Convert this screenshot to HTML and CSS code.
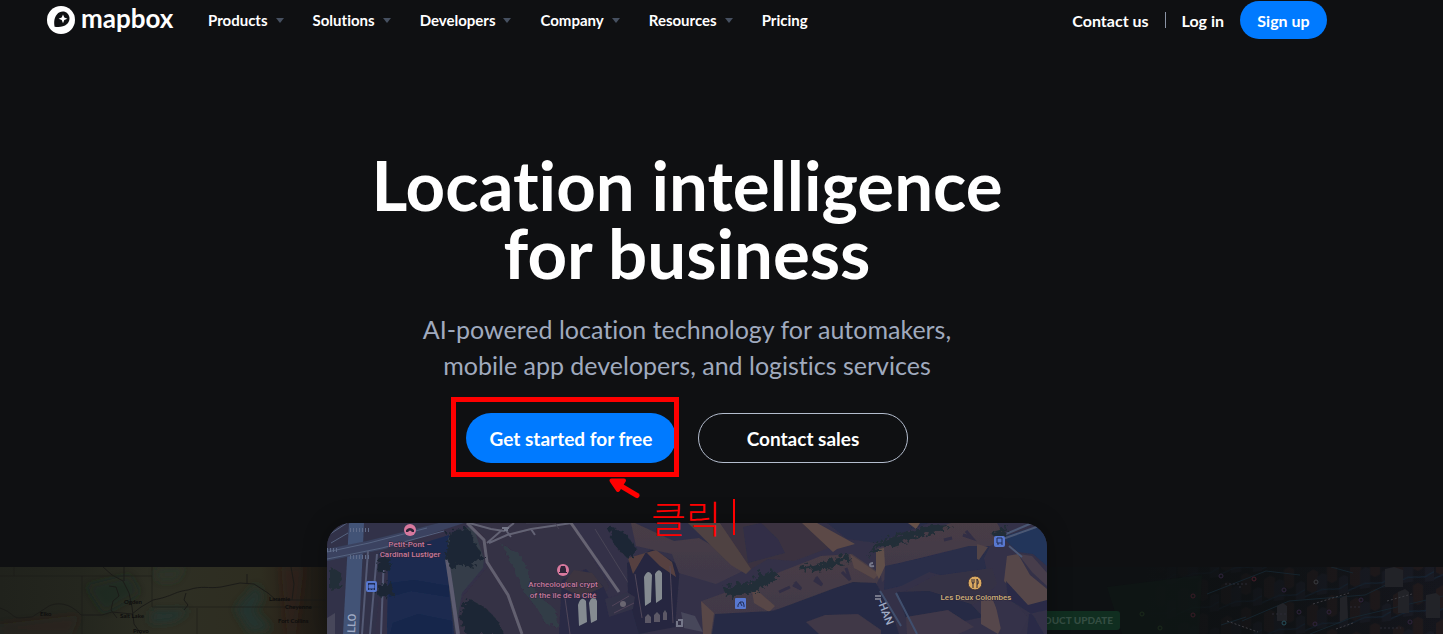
FILE: index.html
```html
<!DOCTYPE html>
<html lang="en">
<head>
  <meta charset="UTF-8" />
  <title>Mapbox - Location intelligence for business</title>
  <meta name="viewport" content="width=device-width, initial-scale=1" />
  <link rel="stylesheet" href="styles.css">
</head>
<body>
  <header class="site-header">
    <a class="logo" href="#">
      <svg class="logo-mark" viewBox="0 0 28 28" aria-hidden="true">
        <circle cx="14" cy="14" r="14" fill="#fff" />
        <path d="M7.6 20.7C6.9 16.5 7 11.800 9.900 8.500 12.800 5 17.600 4.700 20.500 7.500 23.400 10.500 23.200 15.100 20 18.100 16.500 21.200 11.800 21.400 7.600 20.700Z" fill="#0f1012" />
        <path d="M16 8.400 17.300 11.500 20.400 12.800 17.300 14.100 16 17.200 14.700 14.100 11.600 12.800 14.700 11.500Z" fill="#fff" />
      </svg>
      <span>mapbox</span>
    </a>
    <nav class="main-nav">
      <a class="has-menu" href="#">Products</a>
      <a class="has-menu" href="#">Solutions</a>
      <a class="has-menu" href="#">Developers</a>
      <a class="has-menu" href="#">Company</a>
      <a class="has-menu" href="#">Resources</a>
      <a href="#">Pricing</a>
    </nav>
    <div class="account">
      <a href="#">Contact us</a>
      <span class="divider"></span>
      <a href="#">Log in</a>
      <button class="signup" type="button">Sign up</button>
    </div>
  </header>

  <main>
    <section class="hero">
      <h1>Location intelligence<br>for business</h1>
      <p>AI-powered location technology for automakers,<br>mobile app developers, and logistics services</p>
      <div class="actions">
        <div class="callout">
          <button class="btn btn-primary" type="button">Get started for free</button>
          <span class="callout-frame"></span>
          <svg class="callout-arrow" viewBox="0 0 32 22" aria-hidden="true">
            <path d="M29 18.500 13 9" stroke="#f00" stroke-width="5" stroke-linecap="round" />
            <path d="M3.500 3.500H16L10 13Z" fill="#f00" stroke="#f00" stroke-width="4" stroke-linejoin="round" />
          </svg>
          <span class="callout-text" lang="ko">클릭</span>
        </div>
        <button class="btn btn-outline" type="button">Contact sales</button>
      </div>
    </section>

    <section class="carousel">
      <div class="slide slide-prev">
        <svg viewBox="0 0 327 67" preserveAspectRatio="xMinYMin slice" aria-hidden="true">
          <defs>
            <linearGradient id="land" x1="0" x2="1">
              <stop offset="0" stop-color="#20221c" />
              <stop offset=".25" stop-color="#24261e" />
              <stop offset=".5" stop-color="#2e2f24" />
              <stop offset=".8" stop-color="#2e2d20" />
              <stop offset=".88" stop-color="#292219" />
              <stop offset="1" stop-color="#1c1a15" />
            </linearGradient>
            <filter id="soft"><feGaussianBlur stdDeviation="4" /></filter>
          </defs>
          <rect width="327" height="67" fill="url(#land)" />
          <g filter="url(#soft)">
            <path d="M152 44 190 43 174 54 150 56ZM235 42 257 17 263 30 255 44 272 62 250 66Z" fill="#183536" opacity=".65" />
            <path d="M0 57 80 48 72 67H0ZM281 0H304L296 67H287Z" fill="#3b2118" opacity=".3" />
            <path d="M86 19 130 8 140 26 104 46Z" fill="#1c2824" opacity=".5" />
            <path d="M154 3 186 0 176 14 158 14Z" fill="#213a2f" opacity=".4" />
          </g>
          <g fill="none" stroke="#1b1b18">
            <path d="M0 9H152M82 9V67M152 0V40H327M197 41V67M14 0V9M312 0V38" opacity=".65" />
            <path d="M0 41C12 45 13 51 19 51L32 50 49 39C60 34 72 38 81 48H102L112 45 132 47 141 40 153 33C174 29 173 25 188 23 203 18 207 22 221 20L240 16 254 17 268 26 276 33H300L327 33" />
            <path d="M103 0 112 8 123 14 129 26 132 40 134 57 141 67M124 0V14M109 19 116 20 119 29 113 34 111 43 117 51M291 0 294 17 292 33M186 26 184 33 188 38 184 43M247 7V16" />
          </g>
          <g class="map-labels">
            <text x="124" y="37">Ogden</text><text x="120" y="51">Salt Lake</text>
            <text x="133" y="66">Provo</text><text x="40" y="49">Elko</text>
            <text x="269" y="34">Laramie</text><text x="285" y="42">Cheyenne</text><text x="278" y="56">Fort Collins</text>
          </g>
        </svg>
      </div>

      <div class="slide slide-current">
        <svg viewBox="0 0 720 111" preserveAspectRatio="xMidYMin slice" role="img" aria-label="3D map of Paris">
          <defs>
            <linearGradient id="roof" x1="0" y1="0" x2="0" y2="1">
              <stop offset="0" stop-color="#483c45" />
              <stop offset="1" stop-color="#3f3848" />
            </linearGradient>
            <filter id="edge"><feGaussianBlur stdDeviation=".6" /></filter>
            <filter id="rough" x="-20%" y="-20%" width="140%" height="140%">
              <feTurbulence baseFrequency=".14" numOctaves="2" seed="4" />
              <feDisplacementMap in="SourceGraphic" scale="10" />
            </filter>
          </defs>
          <rect width="720" height="111" fill="#343148" />
          <g filter="url(#edge)">
            <!-- left bank, avenue and river -->
            <path d="M0 0H112L55 38 48 111H0Z" fill="#313349" />
            <path d="M22 0H37L32 111H16Z" fill="#435276" />
            <path d="M0 26 40 18 112 0H137L58 26 0 38Z" fill="#3a4360" />
            <path d="M0 29 42 20 100 5M0 36 55 25 117 8M0 13 20 0M4 20 21 10" fill="none" stroke="#566280" />
            <path d="M41 28 35 111M50 31 43 111M57 32 54 111" fill="none" stroke="#545a74" stroke-width="2" />
            <path d="M61 31 122 12 120 45 127 111H60Z" fill="#1b2b50" />
            <path d="M64 60 87 57 122 63V74L84 68 62 74ZM66 100 91 91 125 98V111H63Z" fill="#142449" opacity=".7" />
            <!-- island: quay, square and paths -->
            <path d="M121 15 145 2 158 27 156 45 135 70 128 111 122 65Z" fill="#343c4a" />
            <path d="M145 0H245L282 63 260 111H129L136 73 160 44Z" fill="#353044" />
            <path d="M173 20 190 28 199 46 207 69 225 83 229 101 216 98 207 82 194 66 181 35Z" fill="#31474a" opacity=".6" filter="url(#rough)" />
            <path d="M120 36 125 69 131 111" fill="none" stroke="#5d5b70" stroke-width="4" />
            <path d="M140 0 157 17 160 39 181 72 195 111" fill="none" stroke="#62606f" stroke-width="3" />
            <path d="M142 0 164 6 177 8 187 0M162 20 180 12 204 6 245 0M178 6 184 14M204 6 208 12M160 20 175 7" fill="none" stroke="#636374" stroke-width="2" />
            <path d="M244 0 292 69" fill="none" stroke="#666472" stroke-width="3" />
            <path d="M199 0 228 0 232 6M268 6 307 69" fill="none" stroke="#494557" />
            <!-- cathedral -->
            <path d="M235 57 259 46 276 63 283 78 307 72 312 111H232Z" fill="#292b45" />
            <path d="M234 64 247 47 265 50 276 64 254 74Z" fill="#3d3541" />
            <path d="M300 40 326 26 353 43 348 104 312 111 301 72Z" fill="#25273f" />
            <path d="M301 35 329 27 345 39 349 54 333 43 319 29 306 51Z" fill="#57413f" />
            <path d="M278 76 300 69 308 74 306 86 282 94Z" fill="#333047" />
            <path d="M285 83 302 73M287 90 307 80M308 51 315 95M343 43 346 100M238 75 243 111" stroke="#51465a" fill="none" />
            <path d="M251 82Q254 72 259 78L260 99 252 103ZM262 80Q266 69 270 78L270 97 264 100ZM317 54Q321 45 325 52L324 79 318 83ZM328 51Q332 44 335 50L335 76 329 80Z" fill="#858b91" />
            <path d="M318 94 321 91 324 94V100H318ZM327 92 330 89 333 92V99H327ZM336 90 338 87 340 90V97H336Z" fill="#5b5866" />
            <circle cx="296" cy="81" r="3" fill="#6b6671" />
            <!-- city blocks -->
            <path d="M304 0H393L424 44 389 61 352 50 345 31 309 23Z" fill="url(#roof)" />
            <path d="M308 0 347 18 372 15 398 30 393 0Z" fill="#2e2e46" />
            <path d="M361 0 393 0 425 45 419 51 404 42Z" fill="#504242" />
            <path d="M393 0H485L514 15 510 22 467 38 441 36 424 46Z" fill="#3a3240" />
            <path d="M416 4 434 0 451 16 458 30 421 40Z" fill="#302f46" />
            <path d="M475 0H490L528 21 510 26 506 29Z" fill="#5c4a46" />
            <path d="M500 0H602L549 20 520 16Z" fill="#2b2e48" />
            <path d="M581 0 593 0 589 6Z" fill="#66514a" />
            <path d="M375 78 422 61 494 33 525 31 554 51 547 67 441 88 399 111H377Z" fill="url(#roof)" />
            <path d="M374 78 387 90 384 111H376ZM424 62 448 83 442 89 427 80ZM523 31 552 51 547 56 527 45Z" fill="#584746" />
            <path d="M388 91 446 88 508 65 526 59 549 60 566 91 572 111H385Z" fill="#272b44" />
            <path d="M549 26 624 0H670L678 14 660 25 649 24 576 39 562 53 555 59Z" fill="url(#roof)" />
            <path d="M549 27 557 25 558 43 552 56 549 50Z" fill="#61504a" />
            <path d="M558 43 577 39 642 23 663 23 657 35 661 54 655 63 602 49 574 63 557 67Z" fill="#292d49" />
            <path d="M650 21 661 24 652 37 650 36Z" fill="#524447" />
            <path d="M574 71 607 53 665 45 670 61 655 77 636 86 597 86Z" fill="#363245" />
            <path d="M570 69 602 68 644 81 656 94 623 101 580 98Z" fill="#252a44" />
            <path d="M479 99 498 92 531 91 554 107V111H492Z" fill="#3f3747" />
            <path d="M579 94 621 87 647 104 631 111H580Z" fill="#413848" />
            <path d="M654 78 665 75 676 101 671 111 654 101Z" fill="#56474b" />
            <path d="M667 75 688 80 701 95 693 111H675Z" fill="#363249" />
            <path d="M680 33 691 31 703 52 720 66V81L701 84 677 58Z" fill="#574749" />
            <path d="M691 31 705 33 720 50V63L705 49Z" fill="#473e4b" />
            <path d="M679 58 701 82 720 77V87L702 91 700 111H717L706 92 681 76Z" fill="#292c47" />
            <path d="M675 14 720 0V43L706 31 691 29Z" fill="#20345a" />
            <path d="M673 17 715 2M679 11 705 0M682 23 695 34" stroke="#4b5874" stroke-width="2" fill="none" />
            <path d="M569 70 590 111M553 68 574 103" stroke="#41506e" stroke-width="2" fill="none" />
            <path d="M0 95 8 90V111H0ZM354 89 368 93 376 109 357 105Z" fill="#47465a" />
            <path d="M452 69 463 64M466 62 474 66 468 59M487 57 495 62 489 54M515 49 523 57 519 45M617 17 625 15M636 12 645 15 639 8" stroke="#302e45" stroke-width="3" fill="none" />
          </g>
          <!-- trees -->
          <g filter="url(#rough)">
            <path d="M121 5 140 4 148 22 155 30 143 42 132 39 120 42 115 29ZM51 29 62 34 58 46 47 45ZM49 59 63 57 64 69 53 73 46 68ZM138 72 157 83 168 95 175 111H137L130 89ZM280 0 298 9 308 25 300 34 290 26 281 12Z" fill="#1c2834" />
            <path d="M468 43 512 31 520 28 519 37 478 47ZM538 32 546 25 590 12 624 0 594 1 545 17ZM394 63 420 56 442 44 450 49 429 65 398 73ZM659 7 680 1 673 14ZM0 42 10 46 12 61 0 64Z" fill="#232f38" />
          </g>
          <g class="crossing" fill="none" stroke="#5f6b89" stroke-width="4" stroke-dasharray="1 2">
            <path d="M23 7H44M23 34H44M0 27H10" />
          </g>
          <g class="street-labels">
            <text transform="translate(28 110) rotate(-87)">LLO</text>
            <text transform="translate(550 78) rotate(68)">-HAN</text>
          </g>
          <g class="place-labels">
            <text x="83" y="24">Petit-Pont –</text><text x="83" y="34">Cardinal Lustiger</text>
            <text x="236" y="64">Archeological crypt</text><text x="236" y="75">of the île de la Cité</text>
            <text class="food" x="649" y="77">Les Deux Colombes</text>
          </g>
          <circle cx="83" cy="7" r="6" fill="#d8799e" />
          <path d="M79 9V7Q83 3 87 7V9H85Q83 6 81 9Z" fill="#2f2438" />
          <circle cx="236" cy="47" r="6" fill="#d8799e" />
          <path d="M232 50H240V49H239V46L238 43H234L233 46V49H232Z" fill="#2f2438" />
          <circle cx="648" cy="60" r="7" fill="#dba960" stroke="#332b37" />
          <path d="M645 56V59Q645 60 646 60V65M647 56V60H645M650 65V56Q652 58 651 61H650" fill="none" stroke="#332b37" />
          <!-- transit stops -->
          <rect x="40" y="59" width="9" height="9" rx="1" fill="#202c55" stroke="#5878d0" stroke-width="2" />
          <path d="M42 62H47V65H42ZM43 66V67M46 66V67" fill="#5878d0" stroke="#5878d0" />
          <rect x="667" y="13" width="11" height="11" rx="2" fill="#5878d0" />
          <path d="M670 15H675V20H670ZM671 20V22M675 20V22" fill="none" stroke="#202c55" />
          <rect x="408" y="75" width="11" height="11" rx="1" fill="#5878d0" />
          <path d="M411 82 413 79H416L417 82M413 79 415 83M410 83H412M416 83H418" fill="none" stroke="#202c55" />
          <path d="M175 5H182M177 7H181M351 97H355V103H350V98M546 40Q543 40 543 42T547 43M548 73H554M548 76H554" fill="none" stroke="#757789" stroke-width="2" />
        </svg>
      </div>

      <div class="slide slide-next">
        <svg viewBox="0 0 396 67" preserveAspectRatio="xMinYMin slice" aria-hidden="true">
          <defs>
            <linearGradient id="night" x1="0" x2="1">
              <stop offset="0" stop-color="#0c0e10" />
              <stop offset=".35" stop-color="#101315" />
              <stop offset="1" stop-color="#15161d" />
            </linearGradient>
            <linearGradient id="shade" x1="0" x2="1">
              <stop offset=".25" stop-color="#0e1113" />
              <stop offset="1" stop-color="#0e1113" stop-opacity="0" />
            </linearGradient>
            <pattern id="towers" width="43" height="34" patternUnits="userSpaceOnUse" patternTransform="skewY(-8)">
              <path d="M2 9 8 6 13 9V27L7 29 2 26ZM22 2 27 0 32 3V20L27 22 22 19Z" fill="#211a1c" />
              <path d="M12 14 17 11 22 13V32H12ZM34 18 39 16 43 18V34H34Z" fill="#191b24" />
              <path d="M0 32 17 27 34 29 43 25" fill="none" stroke="#16283a" />
            </pattern>
          </defs>
          <rect width="396" height="67" fill="url(#night)" />
          <rect width="396" height="67" fill="url(#towers)" />
          <rect width="396" height="67" fill="url(#shade)" />
          <path d="M60 20 155 8 152 67H75Z" fill="#101b16" opacity=".4" />
          <g fill="none" stroke="#172833" opacity=".8">
            <path d="M160 27 219 4 253 8M195 54 242 34 318 28 351 12M263 67 304 51 396 29M284 0 306 6M174 58 199 50" />
          </g>
          <g fill="#222328">
            <path d="M230 39 236 36 240 39V54H230ZM293 31 300 28 301 51 293 55ZM338 2 347 0 356 3V20H338ZM351 25 358 22 362 25V46H351ZM379 28 389 26 393 29V51H379Z" />
          </g>
          <g fill="none" stroke="#2a2b34" stroke-dasharray="2 2">
            <path d="M180 54 211 65M266 37 302 26M340 34 365 27M289 62 306 56" stroke="#3d3d43" />
            <path d="M178 17H200M194 20H191M225 47H239M333 61H354M303 40H315" />
          </g>
          <g fill="none" stroke="#30243d">
            <circle cx="174" cy="9" r="2" /><circle cx="207" cy="12" r="2" stroke="#481e2b" />
            <circle cx="146" cy="29" r="2" stroke="#3a1c26" /><circle cx="146" cy="48" r="2" stroke="#3a1c26" />
            <circle cx="237" cy="23" r="2" /><circle cx="269" cy="15" r="2" stroke="#3a3c40" />
            <circle cx="314" cy="33" r="2" /><circle cx="252" cy="45" r="2" /><circle cx="282" cy="45" r="2" />
            <circle cx="237" cy="56" r="2" stroke="#27505b" /><circle cx="268" cy="57" r="2" /><circle cx="363" cy="55" r="2" />
            <circle cx="95" cy="47" r="2" stroke="#1b2b1b" /><circle cx="113" cy="61" r="2" stroke="#1b2b1b" />
          </g>
        </svg>
        <span class="tag">PRODUCT UPDATE</span>
      </div>
    </section>
  </main>
</body>
</html>
```

FILE: styles.css
```css
:root {
  --bg: #0f1012;
  --blue: #007aff;
  --muted: #a0aabe;
  --mark: #ff0000;
  --offset: 69px;
}
* {
  box-sizing: border-box;
}
body {
  margin: 0;
  display: flex;
  flex-direction: column;
  height: 100vh;
  overflow: hidden;
  background: var(--bg);
  color: #fff;
  font-family: Lato, "Noto Sans CJK KR", sans-serif;
  font-variant-ligatures: none;
}
a {
  color: inherit;
  text-decoration: none;
}
button {
  font: inherit;
  color: inherit;
  border: none;
  cursor: pointer;
}

/* header */
.site-header {
  display: flex;
  align-items: center;
  height: 40px;
  padding: 0 116px 0 47px;
  font-size: 15px;
  font-weight: 700;
  white-space: nowrap;
}
.logo {
  display: flex;
  align-items: center;
  gap: 6px;
  width: 161px;
  font-size: 26px;
  line-height: 28px;
}
.logo span {
  padding-bottom: 4px;
}
.logo-mark {
  width: 28px;
  height: 28px;
}
.main-nav {
  display: flex;
  gap: 29px;
}
.has-menu::after {
  content: "";
  display: inline-block;
  margin-left: 8px;
  vertical-align: 3px;
  border: 4px solid transparent;
  border-top: 5px solid #465060;
  border-bottom: 0;
}
.account {
  display: flex;
  align-items: center;
  gap: 16px;
  margin-left: auto;
  font-size: 16px;
}
.divider {
  width: 1px;
  height: 16px;
  background: #8b94a5;
}
.signup {
  width: 87px;
  height: 38px;
  padding: 0;
  border-radius: 19px;
  background: var(--blue);
}

/* hero */
main {
  flex: 1;
  display: flex;
  flex-direction: column;
  min-height: 0;
}
.hero {
  padding: 111px var(--offset) 60px 0;
  text-align: center;
}
h1 {
  margin: 0 0 24px;
  font-size: 69px;
  line-height: 68px;
  font-weight: 700;
}
.hero p {
  margin: 0 0 30px;
  color: var(--muted);
  font-size: 25px;
  line-height: 36px;
}
.actions {
  display: flex;
  justify-content: center;
  gap: 22px;
}
.btn {
  display: block;
  width: 210px;
  height: 50px;
  border-radius: 25px;
  font-size: 19px;
  font-weight: 700;
}
.btn-primary {
  background: var(--blue);
}
.btn-outline {
  background: none;
  border: 1px solid #b4bdce;
}

/* red marker over the main button */
.callout {
  position: relative;
  z-index: 2;
}
.callout-frame {
  position: absolute;
  inset: -16px -3px -14px -15px;
  border: 5px solid var(--mark);
  pointer-events: none;
}
.callout-arrow {
  position: absolute;
  top: 64px;
  left: 142px;
  width: 32px;
  height: 22px;
}
.callout-text {
  position: absolute;
  top: 86px;
  left: 185px;
  padding-right: 12px;
  border-right: 2px solid var(--mark);
  color: var(--mark);
  font: 300 38px/36px "Noto Sans CJK KR", sans-serif;
  white-space: nowrap;
}

/* carousel */
.carousel {
  flex: 1;
  display: grid;
  grid-template-columns: minmax(0, 1fr) 720px minmax(0, 1fr) var(--offset);
  min-height: 111px;
}
.slide {
  position: relative;
  overflow: hidden;
}
.slide svg {
  display: block;
  width: 100%;
  height: 100%;
}
.slide-prev,
.slide-next {
  margin-top: 44px;
}
.slide-current {
  z-index: 1;
  border-radius: 24px 24px 0 0;
  box-shadow: 0 0 24px rgba(0, 0, 0, 0.3);
}
.slide-next {
  grid-column: 3 / 5;
}
.map-labels {
  fill: #0d0d0d;
  font-size: 6px;
  font-weight: 700;
}
.place-labels {
  fill: #c67b9c;
  stroke: #29243b;
  stroke-width: 1px;
  paint-order: stroke;
  font: 500 8px Roboto, sans-serif;
  text-anchor: middle;
}
.place-labels .food {
  fill: #cfb078;
}
.street-labels {
  fill: #a0acc6;
  font: 500 11px Roboto, sans-serif;
}
.tag {
  position: absolute;
  top: 44px;
  right: 323px;
  padding: 0 7px;
  border-radius: 3px;
  background: #102e20;
  color: #344d42;
  font-size: 10px;
  line-height: 19px;
  font-weight: 900;
  white-space: nowrap;
}
```
